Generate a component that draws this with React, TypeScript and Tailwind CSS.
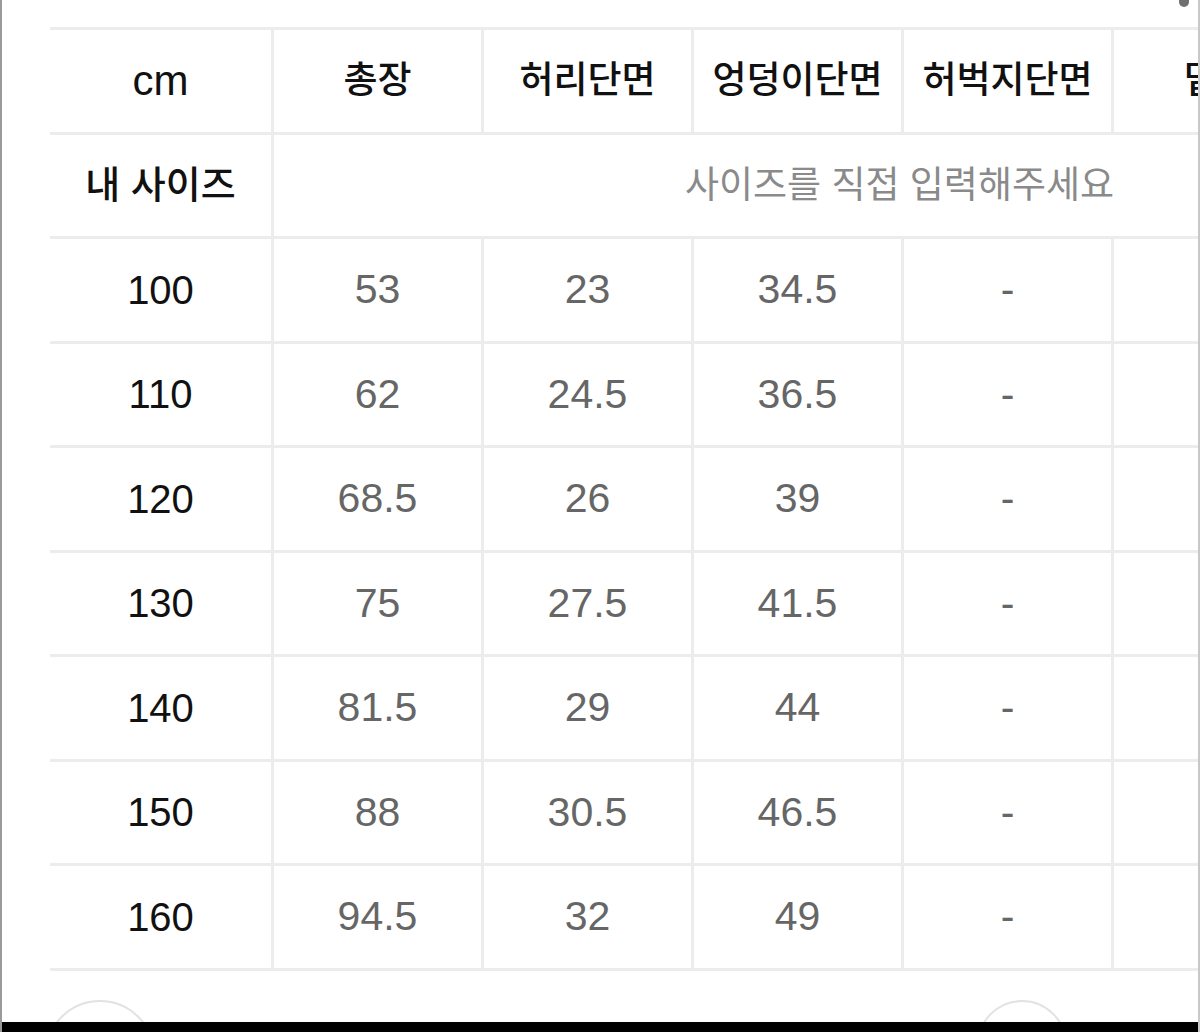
const headers = ["총장", "허리단면", "엉덩이단면", "허벅지단면", "밑위"];

const rows: [string, string[]][] = [
  ["100", ["53", "23", "34.5", "-", "-"]],
  ["110", ["62", "24.5", "36.5", "-", "-"]],
  ["120", ["68.5", "26", "39", "-", "-"]],
  ["130", ["75", "27.5", "41.5", "-", "-"]],
  ["140", ["81.5", "29", "44", "-", "-"]],
  ["150", ["88", "30.5", "46.5", "-", "-"]],
  ["160", ["94.5", "32", "49", "-", "-"]],
];

const cell = "flex items-center justify-center bg-white whitespace-nowrap";

export default function App() {
  return (
    <div className="relative flex h-[1032px] w-[1200px] flex-col overflow-hidden border-l-2 border-r-2 border-l-[#9a9a9a] border-r-[#c8c8c8] bg-white font-['Liberation_Sans','Noto_Sans_CJK_KR',sans-serif]">
      {/* scroll indicator */}
      <div className="absolute right-[9px] top-[-5px] h-[12px] w-[10px] rounded-full bg-[#707070]" />

      <div className="mt-[27px] w-[1300px] pl-[48px]">
        <div className="grid w-[1274px] grid-cols-[221px_repeat(5,207px)] grid-rows-[repeat(9,101.5px)] gap-[3px] bg-[#ececec] py-[3px]">
          <div className={`${cell} text-[42px] text-[#111]`}>cm</div>
          {headers.map((h) => (
            <div key={h} className={`${cell} text-[37px] font-medium text-[#111]`}>
              {h}
            </div>
          ))}

          <div className={`${cell} text-[38px] font-medium text-[#111]`}>내 사이즈</div>
          <div className="col-span-5 flex items-center bg-white pl-[411px] text-[37px] text-[#8a8a8a] whitespace-nowrap">
            사이즈를 직접 입력해주세요
          </div>

          {rows.map(([size, vals]) => (
            <div key={size} className="contents">
              <div className={`${cell} text-[40px] text-[#111]`}>{size}</div>
              {vals.map((v, i) => (
                <div key={i} className={`${cell} text-[41px] text-[#666]`}>
                  {v}
                </div>
              ))}
            </div>
          ))}
        </div>
      </div>

      <div className="mt-auto flex h-[22px] justify-between overflow-hidden pl-[43px] pr-[131px]">
        <div className="h-[110px] w-[110px] shrink-0 rounded-full border-2 border-[#e2e2e2]" />
        <div className="h-[110px] w-[90px] shrink-0 rounded-full border-2 border-[#e2e2e2]" />
      </div>
      <div className="h-[10px] shrink-0 bg-black" />
    </div>
  );
}
